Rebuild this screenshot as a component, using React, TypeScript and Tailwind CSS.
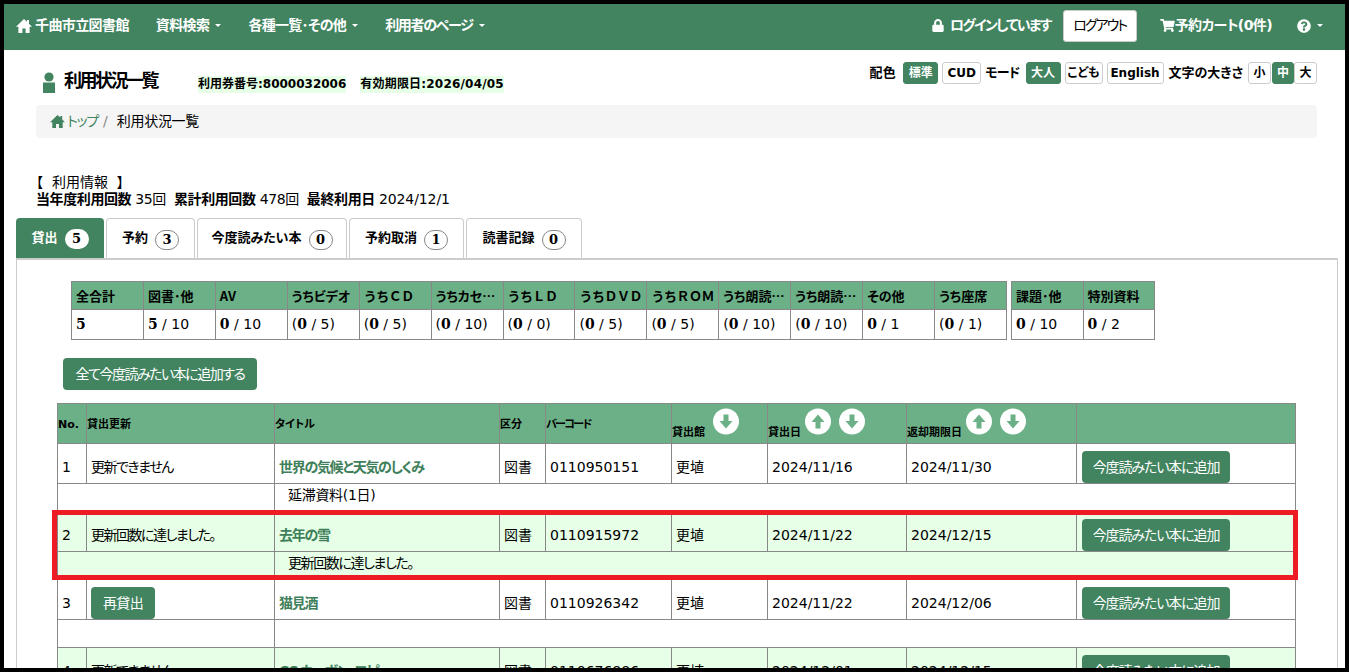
import { FaShoppingCart, FaQuestionCircle, FaLock } from 'react-icons/fa';

const FONT = "[font-family:'DejaVu_Sans','Noto_Sans_CJK_JP',sans-serif] [font-feature-settings:'palt']";

function HomeIcon({ className }: { className?: string }) {
  return (
    <svg viewBox="0 0 16 14" className={className} fill="currentColor">
      <path d="M8 0 L11 2.8 V1 H13 V4.7 L16 7.8 H13.6 V14 H9.6 V9.6 H6.4 V14 H2.4 V7.8 H0 Z" />
    </svg>
  );
}

function Caret() {
  return <span className="ml-[6px] inline-block w-0 h-0 border-x-[3px] border-x-transparent border-t-[3px] border-t-white align-middle" />;
}

function NavItem({ label, track }: { label: string; track: string }) {
  return (
    <span className={`flex items-center font-bold text-[14px] text-white ${track}`}>
      {label}
      <Caret />
    </span>
  );
}

function Opt({ label, on, w }: { label: string; on?: boolean; w: string }) {
  return (
    <span className={`${w} h-[22px] flex items-center justify-center rounded-[3px] border text-[12px] font-bold ${on ? 'bg-[#41845f] border-[#41845f] text-white' : 'bg-white border-[#ccc] text-black'}`}>
      {label}
    </span>
  );
}

function Tab({ label, count, active, w }: { label: string; count: number; active?: boolean; w: string }) {
  return (
    <div className={`${w} h-[40px] flex items-center justify-center gap-[7px] rounded-t-[4px] text-[13px] font-bold ${active ? 'bg-[#41845f] text-white' : 'bg-white border border-b-0 border-[#ccc] text-black'}`}>
      <span className="pb-[1px]">{label}</span>
      <span className={`w-[24px] h-[20px] mt-[2px] rounded-full flex items-center justify-center text-[13px] [font-family:'DejaVu_Serif',serif] ${active ? 'bg-white text-black' : 'bg-white border border-[#888] text-black'}`}>{count}</span>
    </div>
  );
}

function Frac({ a, b, paren }: { a: string; b: string; paren?: boolean }) {
  return (
    <>
      {paren && '('}
      <b className="[font-family:'DejaVu_Serif',serif]">{a}</b> / {b}
      {paren && ')'}
    </>
  );
}

const counts = [
  { h: '全合計', a: '5', b: '' },
  { h: '図書･他', a: '5', b: '10' },
  { h: 'AV', a: '0', b: '10' },
  { h: 'うちビデオ', a: '0', b: '5', p: true },
  { h: 'うちＣＤ', a: '0', b: '5', p: true },
  { h: 'うちカセット', a: '0', b: '10', p: true },
  { h: 'うちＬＤ', a: '0', b: '0', p: true },
  { h: 'うちＤＶＤ', a: '0', b: '5', p: true },
  { h: 'うちＲＯＭ', a: '0', b: '5', p: true },
  { h: 'うち朗読テープ', a: '0', b: '10', p: true },
  { h: 'うち朗読ＣＤ', a: '0', b: '10', p: true },
  { h: 'その他', a: '0', b: '1' },
  { h: 'うち座席', a: '0', b: '1', p: true },
];
const counts2 = [
  { h: '課題･他', a: '0', b: '10' },
  { h: '特別資料', a: '0', b: '2' },
];

function CountTable({ items, w }: { items: { h: string; a: string; b: string; p?: boolean }[]; w: string }) {
  return (
    <table className={`${w} table-fixed border-collapse text-[14px] text-black`}>
      <tbody>
        <tr className="h-[28px] bg-[#6bb086]">
          {items.map((c) => (
            <th
              key={c.h}
              className={`border border-[#888] px-[4px] text-left text-[13px] font-bold whitespace-nowrap overflow-hidden text-ellipsis [font-family:'Noto_Sans_CJK_JP',sans-serif] ${/[Ａ-Ｚ]/.test(c.h) && !c.h.includes('朗読') ? '[font-feature-settings:normal] tracking-[-0.5px]' : ''}`}
            >
              {c.h}
            </th>
          ))}
        </tr>
        <tr className="h-[30px] bg-white">
          {items.map((c) => (
            <td key={c.h} className="border border-[#888] px-[4px] whitespace-nowrap">
              {c.b ? <Frac a={c.a} b={c.b} paren={c.p} /> : <b className="[font-family:'DejaVu_Serif',serif]">{c.a}</b>}
            </td>
          ))}
        </tr>
      </tbody>
    </table>
  );
}

function SortIcon({ dir, gap }: { dir: 'up' | 'down'; gap: string }) {
  return (
    <svg viewBox="0 0 26 26" className={`w-[26px] h-[27px] mb-[2px] shrink-0 ${gap}`}>
      <circle cx="13" cy="13" r="13" fill="#fff" />
      <path
        d={dir === 'down' ? 'M10.5 6 H15.5 V12.5 H19.5 L13 20 L6.5 12.5 H10.5 Z' : 'M10.5 20 H15.5 V13.5 H19.5 L13 6 L6.5 13.5 H10.5 Z'}
        fill="#6bb086"
      />
    </svg>
  );
}

function GreenBtn({ label, w, track }: { label: string; w: string; track: string }) {
  return (
    <span className={`${w} ${track} h-[32px] flex items-center justify-center rounded-[4px] bg-[#41845f] text-white text-[14px]`}>{label}</span>
  );
}

const loans = [
  { no: 1, status: '更新できません', title: '世界の気候と天気のしくみ', code: '0110950151', out: '2024/11/16', due: '2024/11/30', note: '延滞資料(1日)', noteTrack: 'tracking-[-0.3px]', mint: false },
  { no: 2, status: '更新回数に達しました。', title: '去年の雪', code: '0110915972', out: '2024/11/22', due: '2024/12/15', note: '更新回数に達しました。', noteTrack: 'tracking-[-1.4px]', mint: true },
  { no: 3, status: '', title: '猫見酒', code: '0110926342', out: '2024/11/22', due: '2024/12/06', note: '', noteTrack: '', mint: false },
  { no: 4, status: '更新できません', title: 'CC カーボン・コピー', code: '0110676886', out: '2024/12/01', due: '2024/12/15', note: '', noteTrack: '', mint: true },
];

const cell = 'border border-[#888] px-[4px] pt-[7px] pb-0';
const head = 'border border-[#888] px-0 pt-[3px] text-left text-[11px] font-bold align-middle';
const sortHead = 'border border-[#888] px-0 text-left text-[11px] font-bold align-bottom';

export default function App() {
  return (
    <div className={`relative h-[672px] overflow-hidden border-4 border-black bg-white text-[14px] text-black ${FONT}`}>
      {/* navbar */}
      <nav className="h-[46px] bg-[#41845f] flex items-center pb-[3px] pl-[12px] pr-[22px] text-white">
        <div className="flex items-center gap-[3px] font-bold text-[14px] tracking-[-0.6px]">
          <HomeIcon className="w-[16px] h-[14px]" />
          千曲市立図書館
        </div>
        <div className="ml-[27px] flex items-center gap-[27px]">
          <NavItem label="資料検索" track="tracking-[-0.6px]" />
          <NavItem label="各種一覧･その他" track="tracking-[-0.7px]" />
          <NavItem label="利用者のページ" track="tracking-[-1.3px]" />
        </div>
        <div className="ml-auto flex items-center font-bold text-[14px] tracking-[-0.6px]">
          <FaLock className="w-[12px] h-[13px] mr-[6px]" />
          <span className="tracking-[-1.7px]">ログインしています</span>
          <span className="ml-[12px] w-[74px] h-[32px] rounded-[3px] bg-white border border-[#ccc] text-black font-normal tracking-[-2px] flex items-center justify-center">ログアウト</span>
          <span className="ml-[23px] flex items-center">
            <FaShoppingCart className="w-[15px] h-[13px]" />
            予約カート(0件)
          </span>
          <FaQuestionCircle className="ml-[25px] w-[14px] h-[14px]" />
          <Caret />
        </div>
      </nav>

      {/* title row */}
      <div className="pl-[32px] pr-[28px]">
        <div className="flex justify-between h-[55px]">
          <div className="flex items-start mt-[20px]">
            <svg viewBox="0 0 14 21" className="w-[14px] h-[21px] mt-[2px] ml-[6px] fill-[#41845f]">
              <circle cx="7" cy="5" r="4.6" />
              <path d="M1 10.5 H13 V21 H1 Z" />
            </svg>
            <h1 className="ml-[8px] text-[18px] leading-[22px] font-bold tracking-[-2.5px]">利用状況一覧</h1>
            <span className="ml-[41px] mt-[6px] text-[12px] leading-[17px] font-bold bg-[#e6ffe6]">利用券番号:8000032006</span>
            <span className="ml-[14px] mt-[6px] text-[12px] leading-[17px] font-bold tracking-[0.2px] bg-[#e6ffe6]">有効期限日:2026/04/05</span>
          </div>
          <div className="flex items-center h-[22px] mt-[12px] text-[13px] font-bold">
            <span className="mr-[7px] tracking-[0.4px]">配色</span>
            <Opt label="標準" on w="w-[35px]" />
            <span className="ml-[4px]"><Opt label="CUD" w="w-[39px]" /></span>
            <span className="ml-[4px] mr-[6px] tracking-[-0.7px]">モード</span>
            <Opt label="大人" on w="w-[35px]" />
            <span className="ml-[4px]"><Opt label="こども" w="w-[38px]" /></span>
            <span className="ml-[4px]"><Opt label="English" w="w-[57px]" /></span>
            <span className="mx-[5px]">文字の大きさ</span>
            <Opt label="小" w="w-[23px]" />
            <span className="ml-[1px]"><Opt label="中" on w="w-[22px]" /></span>
            <Opt label="大" w="w-[23px]" />
          </div>
        </div>

        {/* breadcrumb */}
        <div className="h-[33px] bg-[#f5f5f5] rounded-[4px] flex items-center pl-[14px] text-[14px]">
          <HomeIcon className="w-[15px] h-[13px] text-[#41845f]" />
          <span className="ml-[2px] text-[#41845f] tracking-[-1.2px]">トップ</span>
          <span className="ml-[5px] text-[#888]">/</span>
          <span className="ml-[9px] tracking-[-0.3px]">利用状況一覧</span>
        </div>

        <div className="mt-[36px] text-[14px] leading-[17px]">
          <div>【&nbsp;&nbsp;利用情報&nbsp;&nbsp;】</div>
          <div className="tracking-[-0.4px]">
            <b>当年度利用回数</b> 35回&nbsp; <b>累計利用回数</b> 478回&nbsp; <b>最終利用日</b> <span className="tracking-[-0.1px]">2024/12/1</span>
          </div>
        </div>
      </div>

      {/* tabs */}
      <div className="ml-[12px] mr-[7px] mt-[10px]">
        <div className="flex gap-[2px]">
          <Tab label="貸出" count={5} active w="w-[88px]" />
          <Tab label="予約" count={3} w="w-[89px]" />
          <Tab label="今度読みたい本" count={0} w="w-[150px]" />
          <Tab label="予約取消" count={1} w="w-[115px]" />
          <Tab label="読書記録" count={0} w="w-[116px]" />
        </div>
        <div className="border-t-2 border-x border-[#ccc] h-[420px]">
          <div className="flex gap-[4px] ml-[54px] mt-[21px]">
            <CountTable items={counts} w="w-[936px]" />
            <CountTable items={counts2} w="w-[144px]" />
          </div>
          <div className="ml-[46px] mt-[18px]">
            <GreenBtn label="全て今度読みたい本に追加する" w="w-[194px]" track="tracking-[-1.5px]" />
          </div>

          {/* loans table */}
          <table className="ml-[40px] mt-[13px] w-[1238px] table-fixed border-collapse text-[14px]">
            <colgroup>
              <col className="w-[29px]" />
              <col className="w-[188px]" />
              <col className="w-[225px]" />
              <col className="w-[46px]" />
              <col className="w-[126px]" />
              <col className="w-[96px]" />
              <col className="w-[139px]" />
              <col className="w-[170px]" />
              <col className="w-[219px]" />
            </colgroup>
            <thead>
              <tr className="h-[40px] bg-[#6bb086]">
                <th className={head}>No.</th>
                <th className={head}>貸出更新</th>
                <th className={head}>タイトル</th>
                <th className={head}>区分</th>
                <th className={`${head} tracking-[-1.6px]`}>バーコード</th>
                <th className={sortHead}>
                  <div className="flex items-end pb-[6px]">
                    <span className="leading-[14px] -mb-[3px]">貸出館</span>
                    <SortIcon dir="down" gap="ml-[8px]" />
                  </div>
                </th>
                <th className={sortHead}>
                  <div className="flex items-end pb-[6px]">
                    <span className="leading-[14px] -mb-[3px]">貸出日</span>
                    <SortIcon dir="up" gap="ml-[4px]" />
                    <SortIcon dir="down" gap="ml-[8px]" />
                  </div>
                </th>
                <th className={sortHead}>
                  <div className="flex items-end pb-[6px]">
                    <span className="leading-[14px] -mb-[3px]">返却期限日</span>
                    <SortIcon dir="up" gap="ml-[4px]" />
                    <SortIcon dir="down" gap="ml-[8px]" />
                  </div>
                </th>
                <th className={head} />
              </tr>
            </thead>
            <tbody>
              {loans.map((r) => (
                <LoanRows key={r.no} r={r} />
              ))}
            </tbody>
          </table>
        </div>
      </div>

      {/* red highlight */}
      <div className="absolute left-[48px] top-[506px] w-[1246px] h-[70px] border-[5px] border-[#ed1c24] pointer-events-none" />
    </div>
  );
}

function LoanRows({ r }: { r: (typeof loans)[number] }) {
  const bg = r.mint ? 'bg-[#e6ffe6]' : 'bg-white';
  return (
    <>
      <tr className={`h-[40px] ${bg}`}>
        <td className={cell}>{r.no}</td>
        <td className={`${cell} tracking-[-1.5px]`}>{r.status || <GreenBtn label="再貸出" w="w-[64px]" track="tracking-[-0.7px]" />}</td>
        <td className={`${cell} font-bold text-[#3f7f5b] tracking-[-1.3px] whitespace-nowrap`}>{r.title}</td>
        <td className={cell}>図書</td>
        <td className={cell}>{r.code}</td>
        <td className={cell}>更埴</td>
        <td className={cell}>{r.out}</td>
        <td className={cell}>{r.due}</td>
        <td className={`${cell} pl-[5px]`}><GreenBtn label="今度読みたい本に追加" w="w-[148px]" track="tracking-[-1.1px]" /></td>
      </tr>
      <tr className={`h-[28px] ${bg}`}>
        <td colSpan={2} className="border border-[#888]" />
        <td colSpan={7} className={`border border-[#888] pl-[13px] pb-[4px] ${r.noteTrack}`}>{r.note}</td>
      </tr>
    </>
  );
}
